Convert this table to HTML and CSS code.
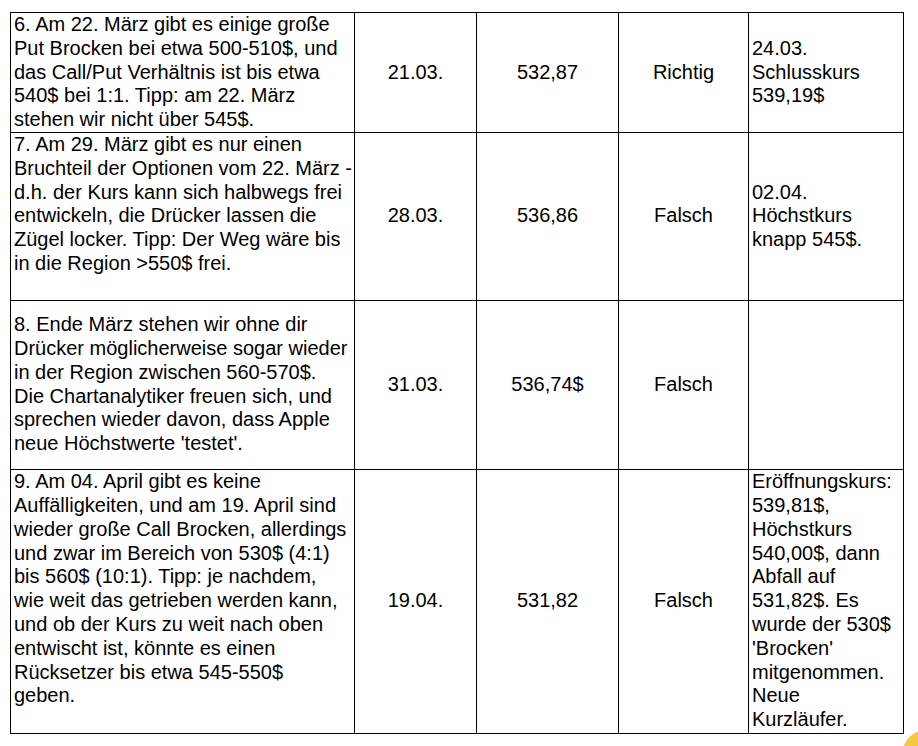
FILE: index.html
```html
<!DOCTYPE html>
<html lang="de">
<head>
<meta charset="utf-8">
<title>Tabelle</title>
<link rel="stylesheet" href="styles.css">
</head>
<body>
<div class="page">
<table class="grid">
<colgroup>
<col class="c-text"><col class="c-date"><col class="c-price"><col class="c-result"><col class="c-note">
</colgroup>
<tbody>
<tr class="r1">
<td class="desc">6. Am 22. März gibt es einige große<br>Put Brocken bei etwa 500-510$, und<br>das Call/Put Verhältnis ist bis etwa<br>540$ bei 1:1. Tipp: am 22. März<br>stehen wir nicht über 545$.</td>
<td class="mid">21.03.</td>
<td class="mid">532,87</td>
<td class="mid">Richtig</td>
<td class="note">24.03.<br>Schlusskurs<br>539,19$</td>
</tr>
<tr class="r2">
<td class="desc">7. Am 29. März gibt es nur einen<br>Bruchteil der Optionen vom 22. März -<br>d.h. der Kurs kann sich halbwegs frei<br>entwickeln, die Drücker lassen die<br>Zügel locker. Tipp: Der Weg wäre bis<br>in die Region &gt;550$ frei.<br>&nbsp;</td>
<td class="mid">28.03.</td>
<td class="mid">536,86</td>
<td class="mid">Falsch</td>
<td class="note">02.04.<br>Höchstkurs<br>knapp 545$.</td>
</tr>
<tr class="r3">
<td class="desc">8. Ende März stehen wir ohne dir<br>Drücker möglicherweise sogar wieder<br>in der Region zwischen 560-570$.<br>Die Chartanalytiker freuen sich, und<br>sprechen wieder davon, dass Apple<br>neue Höchstwerte 'testet'.</td>
<td class="mid">31.03.</td>
<td class="mid">536,74$</td>
<td class="mid">Falsch</td>
<td class="note"></td>
</tr>
<tr class="r4">
<td class="desc">9. Am 04. April gibt es keine<br>Auffälligkeiten, und am 19. April sind<br>wieder große Call Brocken, allerdings<br>und zwar im Bereich von 530$ (4:1)<br>bis 560$ (10:1). Tipp: je nachdem,<br>wie weit das getrieben werden kann,<br>und ob der Kurs zu weit nach oben<br>entwischt ist, könnte es einen<br>Rücksetzer bis etwa 545-550$<br>geben.<br>&nbsp;</td>
<td class="mid">19.04.</td>
<td class="mid">531,82</td>
<td class="mid">Falsch</td>
<td class="note">Eröffnungskurs:<br>539,81$,<br>Höchstkurs<br>540,00$, dann<br>Abfall auf<br>531,82$. Es<br>wurde der 530$<br>'Brocken'<br>mitgenommen.<br>Neue<br>Kurzläufer.</td>
</tr>
</tbody>
</table>
<div class="corner-dot"></div>
</div>
</body>
</html>
```

FILE: styles.css
```css
html, body {
  margin: 0;
  padding: 0;
  background: #ffffff;
}

.page {
  width: 918px;
  height: 746px;
  overflow: hidden;
  position: relative;
  padding: 12px 0 0 10px;
  box-sizing: border-box;
  font-family: "Liberation Sans", Arial, Helvetica, sans-serif;
  color: #000000;
}

.grid {
  border-collapse: collapse;
  table-layout: fixed;
  width: 893px;
  font-size: 20px;
  line-height: 23.8px;
}

.c-text { width: 344px; }
.c-date { width: 122px; }
.c-price { width: 142px; }
.c-result { width: 130px; }
.c-note { width: 155px; }

.grid td {
  border: 1px solid #000000;
  padding: 0 3px;
  vertical-align: middle;
  white-space: nowrap;
  overflow: visible;
}

.grid td.mid {
  text-align: center;
}

.r1 { height: 120px; }
.r2 { height: 167px; }
.r3 { height: 169px; }
.r4 { height: 264px; }

.corner-dot {
  position: absolute;
  left: 903px;
  top: 731px;
  width: 42px;
  height: 42px;
  border-radius: 50%;
  background: #f6c843;
}
```
